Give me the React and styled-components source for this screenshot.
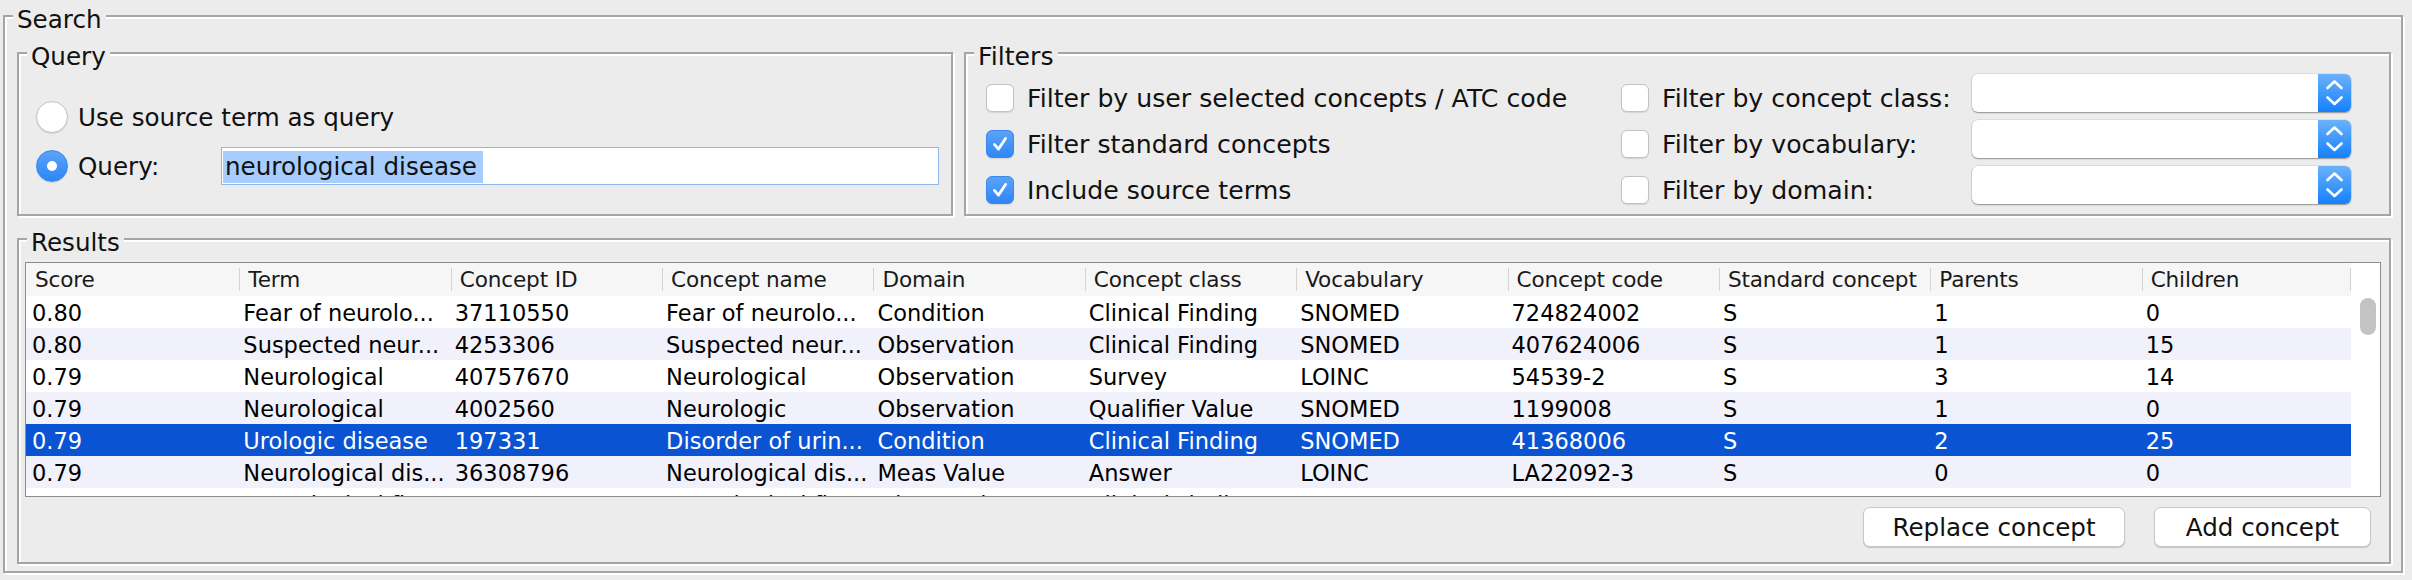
import React from 'react';
import styled, { createGlobalStyle } from 'styled-components';

const GlobalStyle = createGlobalStyle`
  html, body { margin: 0; padding: 0; background: #ececec; }
  body {
    font-family: "DejaVu Sans", "Liberation Sans", sans-serif;
    font-size: 24.6px;
    color: #111;
  }
  * { box-sizing: border-box; }
`;

const Page = styled.div`
  width: 2412px;
  height: 580px;
  padding: 15px 9px 0 3px;
  overflow: hidden;
`;

const Group = styled.div`
  position: relative;
  border: 2px solid #a5a5a5;
  box-shadow: inset 2px 2px 0 #fff, 2px 2px 0 #fff;
`;

const Title = styled.span`
  position: absolute;
  top: -11.5px;
  left: 8px;
  padding: 0 4px;
  line-height: 28px;
  background: #ececec;
  white-space: nowrap;
`;

const SearchGroup = styled(Group)`
  width: 2400px;
  height: 558px;
  padding: 35px 10px 7px 12px;
  display: flex;
  flex-direction: column;
  gap: 22px;
`;

const TopRow = styled.div`
  display: flex;
  gap: 11px;
  height: 164px;
`;

const QueryGroup = styled(Group)`
  flex: 0 0 936px;
  padding: 44px 12px 0 17px;
`;

const QueryGrid = styled.div`
  display: grid;
  grid-template-columns: 185px 1fr;
  grid-template-rows: 38px 38px;
  row-gap: 11px;
`;

const RadioItem = styled.label`
  display: flex;
  align-items: center;
  gap: 10px;
  grid-column: ${p => (p.$wide ? '1 / span 2' : 'auto')};
  white-space: nowrap;
`;

const Radio = styled.span`
  flex: 0 0 32px;
  width: 32px;
  height: 32px;
  border-radius: 50%;
  display: flex;
  align-items: center;
  justify-content: center;
  background: ${p => (p.$checked ? 'linear-gradient(#5aa3f9, #2f86f6)' : '#ffffff')};
  border: 1px solid ${p => (p.$checked ? '#3a88ee' : '#c2c2c2')};
  box-shadow: 0 1px 1px rgba(0, 0, 0, 0.1);
`;

const RadioDot = styled.span`
  width: 10px;
  height: 10px;
  border-radius: 50%;
  background: #fff;
`;

const TextField = styled.div`
  height: 38px;
  background: #fff;
  border: 1.5px solid #8fb6ea;
  padding: 2px 0 0 1px;
  display: flex;
  align-items: center;
  overflow: hidden;
`;

const Selection = styled.span`
  background: #a6cdfd;
  line-height: 32px;
  padding: 0 6px 0 2px;
  white-space: nowrap;
`;

const FiltersGroup = styled(Group)`
  flex: 1;
  padding: 20px 0 0 20px;
  font-size: 25.2px;
`;

const FilterGrid = styled.div`
  display: grid;
  grid-template-columns: 635px 351px 379px;
  grid-template-rows: repeat(3, 38px);
  row-gap: 8px;
`;

const CheckItem = styled.label`
  align-self: end;
  display: flex;
  align-items: center;
  gap: 13px;
  height: 28px;
  white-space: nowrap;
`;

const CheckBox = styled.span`
  flex: 0 0 28px;
  width: 28px;
  height: 28px;
  border-radius: 6px;
  display: flex;
  align-items: center;
  justify-content: center;
  background: ${p => (p.$checked ? 'linear-gradient(#5aa3f9, #2f86f6)' : '#fff')};
  border: 1px solid ${p => (p.$checked ? '#3a88ee' : '#c2c2c2')};
  box-shadow: 0 1px 1px rgba(0, 0, 0, 0.1);
`;

const Combo = styled.div`
  width: 379px;
  height: 38px;
  display: flex;
  background: #fff;
  border-radius: 6px;
  box-shadow: 0 1px 1.5px rgba(0, 0, 0, 0.35), 0 0 0 0.5px rgba(0, 0, 0, 0.12);
`;

const ComboText = styled.span`
  flex: 1;
`;

const ComboButton = styled.span`
  flex: 0 0 33px;
  height: 38px;
  border-radius: 0 6px 6px 0;
  background: linear-gradient(#6ab2fb, #1580fb);
  display: flex;
`;

const ResultsGroup = styled(Group)`
  height: 326px;
  padding: 22px 8px 15px 6px;
  display: flex;
  flex-direction: column;
`;

const Table = styled.div`
  height: 235px;
  border: 1px solid #8c8c8c;
  background: #fff;
  display: flex;
  flex-direction: column;
  overflow: hidden;
  font-size: 22.5px;
`;

const HeaderRow = styled.div`
  display: flex;
  height: 33px;
  flex: 0 0 33px;
`;

const HeaderCells = styled.div`
  width: 2325px;
  display: grid;
  grid-template-columns: repeat(11, 1fr);
  background: #f6f6f6;
`;

const HeaderCell = styled.div`
  display: flex;
  align-items: center;
  padding-left: ${p => (p.$first ? '9px' : '11px')};
  font-size: 21.6px;
  letter-spacing: -0.15px;
  color: #1a1a1a;
  white-space: nowrap;
  overflow: hidden;
  background-image: ${p =>
    [
      p.$first ? null : 'linear-gradient(#d3d3d3, #d3d3d3)',
      p.$last ? 'linear-gradient(#d3d3d3, #d3d3d3)' : null,
    ]
      .filter(Boolean)
      .join(', ') || 'none'};
  background-repeat: no-repeat;
  background-size: 1px 23px;
  background-position: ${p =>
    [p.$first ? null : '2px center', p.$last ? 'right center' : null].filter(Boolean).join(', ') || '0 0'};
`;

const Corner = styled.div`
  flex: 1;
  background: #fff;
`;

const Body = styled.div`
  display: flex;
  flex: 1;
  overflow: hidden;
`;

const Rows = styled.div`
  width: 2325px;
  overflow: hidden;
`;

const Row = styled.div`
  display: grid;
  grid-template-columns: repeat(11, 1fr);
  height: 32px;
  background: ${p => (p.$selected ? '#0a53d3' : p.$odd ? '#f1f1fc' : '#ffffff')};
  color: ${p => (p.$selected ? '#fff' : '#000')};
`;

const Cell = styled.div`
  display: flex;
  align-items: center;
  padding: 2px 0 0 6px;
  white-space: nowrap;
  overflow: hidden;
`;

const ScrollTrack = styled.div`
  flex: 1;
  padding: 2px 4px 0 9px;
  background: #fff;
`;

const ScrollThumb = styled.div`
  width: 16px;
  height: 37px;
  border-radius: 8px;
  background: #c3c3c3;
`;

const ButtonBar = styled.div`
  display: flex;
  justify-content: flex-end;
  gap: 29px;
  margin-top: 10px;
  padding-right: 10px;
`;

const Button = styled.button`
  width: ${p => p.$w}px;
  height: 40px;
  font: inherit;
  color: #111;
  background: #fff;
  border: 1px solid #c8c8c8;
  border-radius: 7px;
  box-shadow: 0 1px 1px rgba(0, 0, 0, 0.18);
  padding: 0;
`;

const columns = [
  'Score', 'Term', 'Concept ID', 'Concept name', 'Domain', 'Concept class',
  'Vocabulary', 'Concept code', 'Standard concept', 'Parents', 'Children',
];

const rows = [
  ['0.80', 'Fear of neurolo...', '37110550', 'Fear of neurolo...', 'Condition', 'Clinical Finding', 'SNOMED', '724824002', 'S', '1', '0'],
  ['0.80', 'Suspected neur...', '4253306', 'Suspected neur...', 'Observation', 'Clinical Finding', 'SNOMED', '407624006', 'S', '1', '15'],
  ['0.79', 'Neurological', '40757670', 'Neurological', 'Observation', 'Survey', 'LOINC', '54539-2', 'S', '3', '14'],
  ['0.79', 'Neurological', '4002560', 'Neurologic', 'Observation', 'Qualifier Value', 'SNOMED', '1199008', 'S', '1', '0'],
  ['0.79', 'Urologic disease', '197331', 'Disorder of urin...', 'Condition', 'Clinical Finding', 'SNOMED', '41368006', 'S', '2', '25'],
  ['0.79', 'Neurological dis...', '36308796', 'Neurological dis...', 'Meas Value', 'Answer', 'LOINC', 'LA22092-3', 'S', '0', '0'],
  ['0.79', 'Neurological fi...', '4011630', 'Neurological fi...', 'Observation', 'Clinical Finding', 'SNOMED', '102957003', 'S', '1', '12'],
];

const Check = () => (
  <svg width="28" height="28" viewBox="0 0 28 28">
    <path d="M8 14.5 L12.3 19.5 L20 8" fill="none" stroke="#fff" strokeWidth="3" strokeLinecap="round" strokeLinejoin="round" />
  </svg>
);

const Arrows = () => (
  <svg width="33" height="38" viewBox="0 0 33 38">
    <path d="M9.5 14 L16.5 7.5 L23.5 14 M9.5 23.5 L16.5 30 L23.5 23.5" fill="none" stroke="#fff" strokeWidth="2.6" strokeLinecap="round" strokeLinejoin="round" />
  </svg>
);

const Filter = ({ checked, children }) => (
  <CheckItem>
    <CheckBox $checked={checked}>{checked && <Check />}</CheckBox>
    {children}
  </CheckItem>
);

const Select = () => (
  <Combo>
    <ComboText />
    <ComboButton><Arrows /></ComboButton>
  </Combo>
);

export default function App() {
  return (
    <Page>
      <GlobalStyle />
      <SearchGroup>
        <Title>Search</Title>
        <TopRow>
          <QueryGroup>
            <Title>Query</Title>
            <QueryGrid>
              <RadioItem $wide>
                <Radio />
                Use source term as query
              </RadioItem>
              <RadioItem>
                <Radio $checked><RadioDot /></Radio>
                Query:
              </RadioItem>
              <TextField>
                <Selection>neurological disease</Selection>
              </TextField>
            </QueryGrid>
          </QueryGroup>
          <FiltersGroup>
            <Title>Filters</Title>
            <FilterGrid>
              <Filter>Filter by user selected concepts / ATC code</Filter>
              <Filter>Filter by concept class:</Filter>
              <Select />
              <Filter checked>Filter standard concepts</Filter>
              <Filter>Filter by vocabulary:</Filter>
              <Select />
              <Filter checked>Include source terms</Filter>
              <Filter>Filter by domain:</Filter>
              <Select />
            </FilterGrid>
          </FiltersGroup>
        </TopRow>
        <ResultsGroup>
          <Title>Results</Title>
          <Table>
            <HeaderRow>
              <HeaderCells>
                {columns.map((c, i) => (
                  <HeaderCell key={c} $first={i === 0} $last={i === columns.length - 1}>{c}</HeaderCell>
                ))}
              </HeaderCells>
              <Corner />
            </HeaderRow>
            <Body>
              <Rows>
                {rows.map((r, i) => (
                  <Row key={i} $odd={i % 2 === 1} $selected={i === 4}>
                    {r.map((v, j) => <Cell key={j}>{v}</Cell>)}
                  </Row>
                ))}
              </Rows>
              <ScrollTrack>
                <ScrollThumb />
              </ScrollTrack>
            </Body>
          </Table>
          <ButtonBar>
            <Button $w={262}>Replace concept</Button>
            <Button $w={217}>Add concept</Button>
          </ButtonBar>
        </ResultsGroup>
      </SearchGroup>
    </Page>
  );
}
